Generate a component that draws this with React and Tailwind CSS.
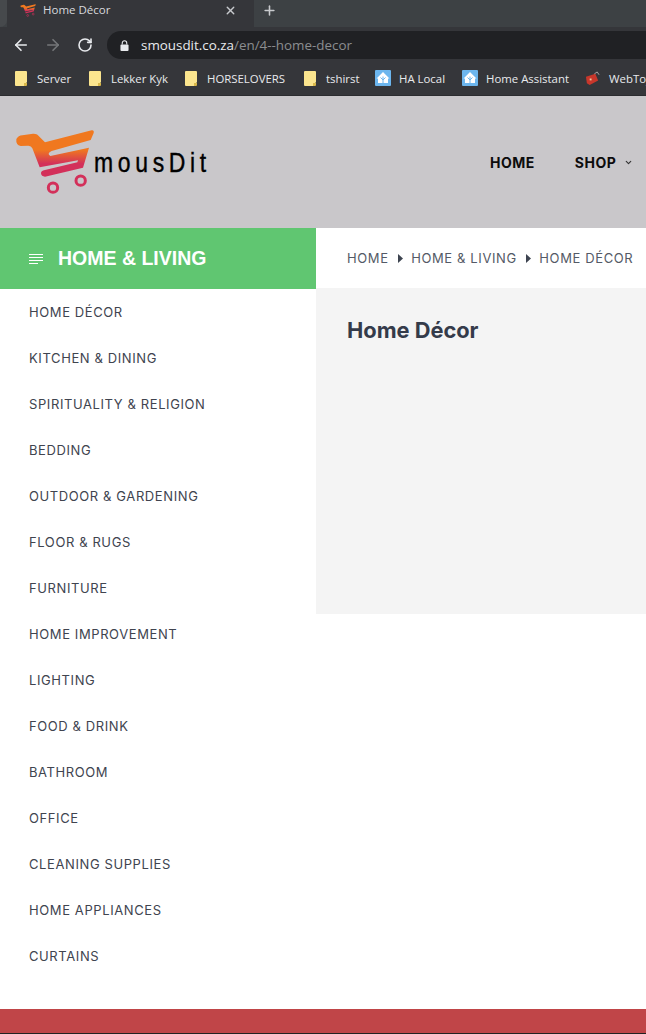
import React from 'react';
import { ArrowLeft, ArrowRight, RotateCw, X, Plus, ChevronDown } from 'lucide-react';

const categories = [
  'Home Décor', 'Kitchen & Dining', 'Spirituality & Religion', 'Bedding', 'Outdoor & Gardening',
  'Floor & Rugs', 'Furniture', 'Home Improvement', 'Lighting', 'Food & Drink', 'Bathroom',
  'Office', 'Cleaning Supplies', 'Home Appliances', 'Curtains',
];

const bookmarks = [
  { label: 'Server', icon: 'folder', width: 'w-[74px]' },
  { label: 'Lekker Kyk', icon: 'folder', width: 'w-[96px]' },
  { label: 'HORSELOVERS', icon: 'folder', width: 'w-[119px]' },
  { label: 'tshirst', icon: 'folder', width: 'w-[71px]' },
  { label: 'HA Local', icon: 'ha', width: 'w-[87px]' },
  { label: 'Home Assistant', icon: 'ha', width: 'w-[123px]' },
  { label: 'WebToys', icon: 'tools', width: 'w-[80px]' },
];

// cart logo, also used small as the favicon
const CartLogo = ({ id, className }) => (
  <svg viewBox="0 0 258 225" className={className}>
    <defs>
      <linearGradient id={id} x1="0" y1="0" x2="0" y2="1">
        <stop offset="0.42" stopColor="#f0781f" />
        <stop offset="0.72" stopColor="#d3305a" />
      </linearGradient>
    </defs>
    <path
      fill={`url(#${id})`}
      d="M22,42 Q28,32 40,31 L72,26 Q85,25 92,36 L108,52 L248,16 Q256,15 254,24 L245,45 L128,78 Q112,85 124,93 L240,68 L222,128 L108,155 Q97,155 96,145 Q95,138 108,135 L205,112 L207,106 L92,127 L70,70 Q67,62 58,62 L35,63 Q20,60 22,42 Z"
    />
    <circle cx="132" cy="188" r="14" fill="none" stroke="#d3305a" strokeWidth="9" />
    <circle cx="215" cy="167" r="14" fill="none" stroke="#d3305a" strokeWidth="9" />
  </svg>
);

const BookmarkIcon = ({ type }) => {
  if (type === 'folder') {
    return (
      <svg viewBox="0 0 12 15" className="w-[12px] h-[15px] shrink-0">
        <path d="M1 0 H11 Q12 0 12 1 V11 L9 15 H1 Q0 15 0 14 V1 Q0 0 1 0 Z" fill="#fbe58e" />
        <path d="M9 15 V12 H12 V14 Q12 15 11 15 Z" fill="#d9b84a" />
      </svg>
    );
  }
  if (type === 'ha') {
    return (
      <svg viewBox="0 0 16 16" className="w-[16px] h-[16px] shrink-0">
        <rect width="16" height="16" rx="1" fill="#6cb6ee" />
        <path d="M8 2 L14.5 8.5 H13 V13 H3 V8.5 H1.5 Z" fill="#fff" />
        <path d="M8 6.5 V13 M5.5 7.5 L8 10 L10.5 7.5" stroke="#6cb6ee" strokeWidth="1" fill="none" />
      </svg>
    );
  }
  return (
    <svg viewBox="0 0 16 16" className="w-[15px] h-[15px] shrink-0">
      <path d="M1 6 L11 3 L14 10 L5 15 L2 13 Z" fill="#c8372b" />
      <path d="M10 3 L13 1 L15 4" stroke="#aaa" strokeWidth="1" fill="none" />
      <rect x="5" y="8" width="2" height="2" fill="#f2c6a0" />
    </svg>
  );
};

const Caret = () => (
  <svg viewBox="0 0 5 9" className="w-[5px] h-[9px] shrink-0 ml-[9px] mr-[8.5px] -mt-px">
    <path d="M0 0 L5 4.5 L0 9 Z" fill="#3d4450" />
  </svg>
);

const App = () => {
  return (
    <div className="w-[646px] h-[1034px] overflow-hidden bg-white flex flex-col">
      {/* browser chrome */}
      <div className="h-[96px] shrink-0 bg-[#35363a] font-['Open_Sans',sans-serif] border-b border-[#2b2c2f]">
        <div className="h-[27px] bg-[#3d4144] flex items-stretch">
          <div className="w-[7px] bg-[#46494c] rounded-br-lg" />
          <div className="w-[240px] bg-[#35363a] flex items-center pl-[12px] pr-[10px] pb-[7px]">
            <CartLogo id="favicon" className="w-[17px] h-[15px] shrink-0" />
            <span className="ml-[7px] text-[11.5px] text-[#d8dade] flex-1">Home Décor</span>
            <X className="w-[13px] h-[13px] text-[#c8cacd]" strokeWidth={2.5} />
          </div>
          <div className="w-[7px] bg-[#35363a]" />
          <div className="flex items-center ml-[8px] pb-[7px]">
            <Plus className="w-[15px] h-[15px] text-[#c8cacd]" strokeWidth={2.5} />
          </div>
        </div>
        <div className="h-[36px] flex items-center">
          <ArrowLeft className="w-[18px] h-[18px] ml-[12px] text-[#e8eaed]" strokeWidth={2.2} />
          <ArrowRight className="w-[18px] h-[18px] ml-[14px] text-[#75777a]" strokeWidth={2.2} />
          <RotateCw className="w-[16px] h-[16px] ml-[15px] text-[#e8eaed]" strokeWidth={2.4} />
          <div className="ml-[14px] flex-1 h-[28px] bg-[#202124] rounded-l-full flex items-center pl-[13px]">
            <svg viewBox="0 0 10 12" className="w-[9px] h-[11px] shrink-0">
              <path d="M2.5 5 V3.2 a2.5 2.5 0 0 1 5 0 V5" stroke="#e8eaed" strokeWidth="1.2" fill="none" />
              <rect x="0.5" y="5" width="9" height="7" rx="1" fill="#e8eaed" />
            </svg>
            <span className="ml-[12px] text-[13.4px] text-[#e8eaed]">
              smousdit.co.za<span className="text-[#8b8d90]">/en/4--home-decor</span>
            </span>
          </div>
        </div>
        <div className="h-[32px] flex items-center pl-[15px] pb-[1px] whitespace-nowrap">
          {bookmarks.map((b) => (
            <div key={b.label} className={`flex items-center shrink-0 ${b.width}`}>
              <BookmarkIcon type={b.icon} />
              <span className={`text-[11.4px] text-[#e8eaed] ${b.icon === 'folder' ? 'ml-[10px]' : b.icon === 'ha' ? 'ml-[8px]' : 'ml-[9px]'}`}>{b.label}</span>
            </div>
          ))}
        </div>
      </div>

      {/* site header */}
      <header className="h-[132px] shrink-0 bg-[#c9c7ca] flex items-center pl-[9px] font-['Inter',sans-serif]">
        <CartLogo id="cart" className="w-[86px] h-[75px] shrink-0 mt-[1px]" />
        <span className="font-['Liberation_Sans',sans-serif] text-[27px] leading-none text-black tracking-[5.5px] [-webkit-text-stroke:0.4px_black] mt-[3px] -ml-[1px] scale-x-[0.85] origin-left w-[115px]">
          mousDit
        </span>
        <nav className="ml-[281px] flex items-center font-bold text-[14px] text-[#0c0c0c] tracking-[0.5px] shrink-0">
          <span>HOME</span>
          <span className="ml-[40px]">SHOP</span>
          <ChevronDown className="ml-[8px] w-[9px] h-[9px] text-[#333]" strokeWidth={3} />
        </nav>
      </header>

      <div className="flex-1 flex font-['Inter',sans-serif]">
        {/* category sidebar */}
        <aside className="w-[316px] shrink-0">
          <div className="h-[61px] bg-[#60c671] flex items-center pl-[29px] text-white">
            <div className="flex flex-col gap-[2px] w-[14px] items-start">
              <span className="block h-px w-[14px] bg-white" />
              <span className="block h-px w-[14px] bg-white" />
              <span className="block h-px w-[14px] bg-white" />
              <span className="block h-px w-[9px] bg-white" />
            </div>
            <span className="ml-[15px] font-['Liberation_Sans',sans-serif] text-[19.5px] font-bold">HOME &amp; LIVING</span>
          </div>
          <ul className="pt-px">
            {categories.map((c) => (
              <li key={c} className="h-[46px] flex items-center pl-[29px] text-[13px] uppercase tracking-[0.6px] text-[#40444f]">
                {c}
              </li>
            ))}
          </ul>
        </aside>

        {/* main column */}
        <main className="flex-1 min-w-0">
          <div className="h-[60px] flex items-center pt-px pl-[31px] text-[13px] tracking-[0.62px] text-[#545a66] whitespace-nowrap">
            <span>HOME</span>
            <Caret />
            <span>HOME &amp; LIVING</span>
            <Caret />
            <span>HOME DÉCOR</span>
          </div>
          <div className="h-[326px] bg-[#f4f4f4] pl-[31px] pt-[29px]">
            <h1 className="text-[21.8px] leading-[26px] font-bold text-[#343b4a]">Home Décor</h1>
          </div>
        </main>
      </div>

      <footer className="h-[25px] shrink-0 bg-[#c04548] border-b border-[#222]" />
    </div>
  );
};

export default App;
